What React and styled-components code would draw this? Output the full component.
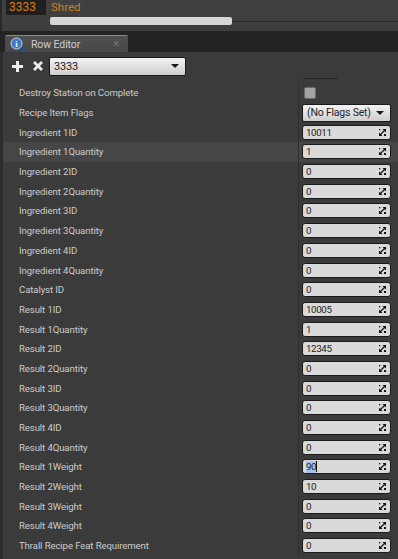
import React from "react";
import styled, { createGlobalStyle } from "styled-components";

const Global = createGlobalStyle`
  html, body { margin: 0; padding: 0; background: #242424; }
  body { font-family: Roboto, "Noto Sans", "DejaVu Sans", sans-serif; }
  * { box-sizing: border-box; }
`;

const Page = styled.div`
  width: 398px;
  height: 559px;
  display: flex;
  flex-direction: column;
  overflow: hidden;
  background: #242424;
`;

const TopPanel = styled.div`
  height: 31px;
  background: #3e3e3e;
  border-left: 2px solid #2a2a2a;
  display: flex;
  flex-direction: column;
`;

const DataRow = styled.div`
  height: 15px;
  display: flex;
  align-items: center;
  background: #404040;
  padding-left: 4px;
`;

const IdCell = styled.div`
  width: 40px;
  height: 15px;
  background: #1f1f1f;
  color: #d67d1c;
  font-size: 12px;
  line-height: 15px;
  padding-left: 3px;
`;

const NameCell = styled.div`
  color: #d67d1c;
  font-size: 11.5px;
  line-height: 15px;
  padding-left: 5px;
`;

const ScrollTrack = styled.div`
  margin-top: 2px;
  margin-left: 48px;
  height: 8px;
  display: flex;
  align-items: center;
`;

const ScrollThumb = styled.div`
  width: 182px;
  height: 8px;
  background: #d6d6d6;
  border-radius: 2px;
`;

const ScrollLine = styled.div`
  flex: 1;
  height: 1px;
  background: #2c2c2c;
`;

const TabStrip = styled.div`
  height: 21px;
  background: #232323;
  display: flex;
  align-items: flex-end;
  padding-left: 5px;
`;

const Tab = styled.div`
  width: 123px;
  height: 17px;
  background: linear-gradient(#505050, #474747);
  border-top: 1px solid #b08a2c;
  border-radius: 2px 2px 0 0;
  display: flex;
  align-items: center;
  padding-left: 5px;
  gap: 5px;
  color: #cfcfcf;
  font-size: 10.5px;
  letter-spacing: -0.1px;
`;

const TabClose = styled.span`
  margin-left: auto;
  margin-right: 8px;
  color: #7a7a7a;
  font-size: 9px;
`;

const Panel = styled.div`
  flex: 1;
  background: #3b3b3b;
  border-left: 3px solid #2c2c2c;
  display: flex;
  flex-direction: column;
`;

const Toolbar = styled.div`
  height: 28px;
  display: flex;
  align-items: center;
  padding-left: 7px;
`;

const ToolIcon = styled.span`
  width: 14px;
  height: 14px;
  display: flex;
  align-items: center;
  justify-content: center;
  margin-right: ${(p) => p.$gap}px;
`;

const Combo = styled.div`
  width: ${(p) => p.$w}px;
  height: ${(p) => p.$h}px;
  border: 1px solid #1a1a1a;
  border-radius: 2px;
  background: linear-gradient(#f2f2f2, #cfcfcf);
  display: flex;
  align-items: center;
  padding: 0 6px 0 4px;
  color: #222;
  font-size: ${(p) => p.$fs}px;
  letter-spacing: -0.2px;
  white-space: nowrap;
  justify-content: space-between;
`;

const Caret = styled.span`
  width: 0;
  height: 0;
  border-left: 4px solid transparent;
  border-right: 4px solid transparent;
  border-top: 4px solid #1a1a1a;
`;

const List = styled.div`
  display: flex;
  flex-direction: column;
  position: relative;
  padding-top: 3px;
`;

const HeaderMark = styled.div`
  position: absolute;
  left: 300px;
  top: -2px;
  width: 35px;
  height: 1px;
  background: #252525;
`;

const Row = styled.div`
  height: 19.7px;
  display: grid;
  grid-template-columns: 295px 1px 1fr;
  align-items: center;
  background: ${(p) => (p.$hl ? "#464646" : "transparent")};
`;

const Label = styled.div`
  padding-left: 16px;
  color: #cbcbcb;
  font-size: 9.6px;
  letter-spacing: -0.1px;
  white-space: nowrap;
`;

const Divider = styled.div`
  height: 100%;
  background: #2e2e2e;
`;

const ValueCell = styled.div`
  padding-left: 3px;
  display: flex;
  align-items: center;
`;

const Field = styled.div`
  width: 89px;
  height: 15px;
  border: 1px solid #1b1b1b;
  border-radius: 3px;
  background: #dadada;
  display: flex;
  align-items: center;
  padding: 0 4px 0 3px;
  color: #1e1e1e;
  font-size: 9.8px;
  letter-spacing: -0.4px;
`;

const FieldText = styled.span`
  flex: 1;
  display: flex;
  align-items: center;
`;

const Sel = styled.span`
  background: #a9c3e6;
  line-height: 12px;
`;

const TextCaret = styled.span`
  width: 1px;
  height: 11px;
  background: #111;
`;

const Check = styled.div`
  width: 12px;
  height: 12px;
  margin-left: 2px;
  border-radius: 2px;
  background: #a3a3a3;
  border: 1px solid #6a6a6a;
`;

const SpinIcon = () => (
  <svg width="7" height="7" viewBox="0 0 7 7">
    <polygon points="3.5,0 7,0 7,3.5" fill="#151515" />
    <polygon points="0,3.5 0,7 3.5,7" fill="#151515" />
    <line x1="1" y1="6" x2="6" y2="1" stroke="#151515" strokeWidth="1.2" />
    <rect x="5" y="5" width="2" height="2" fill="#151515" />
    <rect x="0" y="0" width="1.3" height="1.3" fill="#151515" />
  </svg>
);

const TabIcon = () => (
  <svg width="16" height="15" viewBox="0 0 16 15">
    <line x1="9" y1="9" x2="14" y2="14" stroke="#2f4f8a" strokeWidth="3" strokeLinecap="round" />
    <circle cx="6.5" cy="6.5" r="5.5" fill="#3d78c9" stroke="#cfd8e6" strokeWidth="1" />
    <text x="6.5" y="10" fontSize="9" fontWeight="bold" fill="#fff" textAnchor="middle" fontFamily="Liberation Serif, serif">i</text>
  </svg>
);

const PlusIcon = () => (
  <svg width="11" height="11" viewBox="0 0 11 11">
    <rect x="4" y="0" width="3" height="11" fill="#ededed" />
    <rect x="0" y="4" width="11" height="3" fill="#ededed" />
  </svg>
);

const XIcon = () => (
  <svg width="10" height="10" viewBox="0 0 10 10">
    <line x1="1" y1="1" x2="9" y2="9" stroke="#ededed" strokeWidth="2.6" />
    <line x1="9" y1="1" x2="1" y2="9" stroke="#ededed" strokeWidth="2.6" />
  </svg>
);

const rows = [
  ["Destroy Station on Complete", "check"],
  ["Recipe Item Flags", "flags"],
  ["Ingredient 1ID", "10011"],
  ["Ingredient 1Quantity", "1", true],
  ["Ingredient 2ID", "0"],
  ["Ingredient 2Quantity", "0"],
  ["Ingredient 3ID", "0"],
  ["Ingredient 3Quantity", "0"],
  ["Ingredient 4ID", "0"],
  ["Ingredient 4Quantity", "0"],
  ["Catalyst ID", "0"],
  ["Result 1ID", "10005"],
  ["Result 1Quantity", "1"],
  ["Result 2ID", "12345"],
  ["Result 2Quantity", "0"],
  ["Result 3ID", "0"],
  ["Result 3Quantity", "0"],
  ["Result 4ID", "0"],
  ["Result 4Quantity", "0"],
  ["Result 1Weight", "edit"],
  ["Result 2Weight", "10"],
  ["Result 3Weight", "0"],
  ["Result 4Weight", "0"],
  ["Thrall Recipe Feat Requirement", "0"],
];

function Value({ v }) {
  if (v === "check") return <Check />;
  if (v === "flags")
    return (
      <Combo $w={89} $h={18} $fs={10.5}>
        <span>(No Flags Set)</span>
        <Caret />
      </Combo>
    );
  return (
    <Field>
      <FieldText>
        {v === "edit" ? (
          <>
            <Sel>90</Sel>
            <TextCaret />
          </>
        ) : (
          v
        )}
      </FieldText>
      <SpinIcon />
    </Field>
  );
}

export default function App() {
  return (
    <Page>
      <Global />
      <TopPanel>
        <DataRow>
          <IdCell>3333</IdCell>
          <NameCell>Shred</NameCell>
        </DataRow>
        <ScrollTrack>
          <ScrollThumb />
          <ScrollLine />
        </ScrollTrack>
      </TopPanel>
      <TabStrip>
        <Tab>
          <TabIcon />
          <span>Row Editor</span>
          <TabClose>✕</TabClose>
        </Tab>
      </TabStrip>
      <Panel>
        <Toolbar>
          <ToolIcon $gap={7}>
            <PlusIcon />
          </ToolIcon>
          <ToolIcon $gap={4}>
            <XIcon />
          </ToolIcon>
          <Combo $w={137} $h={19} $fs={11}>
            <span>3333</span>
            <Caret />
          </Combo>
        </Toolbar>
        <List>
          <HeaderMark />
          {rows.map(([label, v, hl]) => (
            <Row key={label} $hl={hl}>
              <Label>{label}</Label>
              <Divider />
              <ValueCell>
                <Value v={v} />
              </ValueCell>
            </Row>
          ))}
        </List>
      </Panel>
    </Page>
  );
}
